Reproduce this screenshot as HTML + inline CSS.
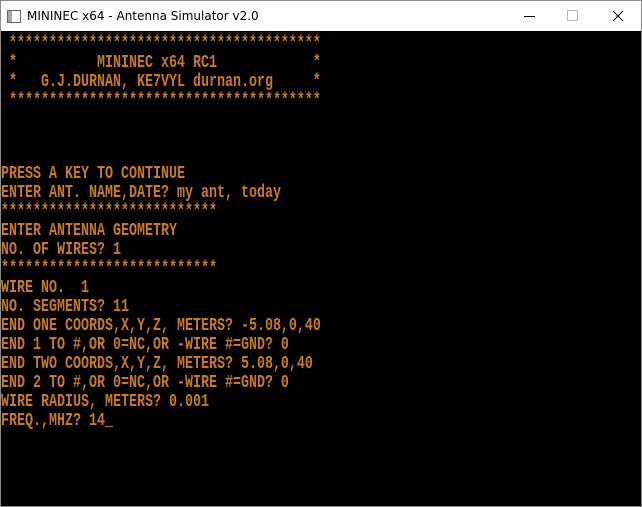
<!DOCTYPE html>
<html><head><style>
body{margin:0;width:642px;height:507px;overflow:hidden;background:#fff;}
.win{position:absolute;left:0;top:0;width:640px;height:505px;border:1px solid #8a8a8a;background:#000;}
.tb{position:absolute;left:0;top:0;width:640px;height:30px;background:#fff;font-family:"DejaVu Sans","Liberation Sans",sans-serif;font-size:12px;color:#000;}
.tb .t{position:absolute;left:26px;top:8px;}
.ic{position:absolute;left:6px;top:9px;width:12px;height:11px;border:1px solid #666;background:linear-gradient(90deg,#9aa 0 4px,#fff 4px);}
.con{position:absolute;left:0;top:31px;font-family:"Liberation Mono",monospace;font-size:13.33px;color:#c77a25;font-weight:bold;}
.l{height:19px;line-height:19px;white-space:pre;}
.l span{display:inline-block;transform:scaleY(1.4);transform-origin:center;}
.h{position:relative;top:3px;}
</style></head><body>
<div class="win">
<div class="tb"><div class="ic"></div><div class="t">MININEC x64 - Antenna Simulator v2.0</div>
<div style="position:absolute;left:523px;top:15px;width:11px;height:1px;background:#000"></div>
<div style="position:absolute;left:566px;top:9px;width:9px;height:9px;border:1px solid #bbb"></div>
<svg style="position:absolute;left:611px;top:9px" width="12" height="12"><path d="M1 1L11 11M11 1L1 11" stroke="#000" stroke-width="1"/></svg>
</div>
<div class="con">
<div class="l h"><span> ***************************************</span></div>
<div class="l h"><span> *          MININEC x64 RC1            *</span></div>
<div class="l h"><span> *   G.J.DURNAN, KE7VYL durnan.org     *</span></div>
<div class="l h"><span> ***************************************</span></div>
<div class="l"> </div><div class="l"> </div><div class="l"> </div>
<div class="l"><span>PRESS A KEY TO CONTINUE</span></div>
<div class="l"><span>ENTER ANT. NAME,DATE? my ant, today</span></div>
<div class="l"><span>***************************</span></div>
<div class="l"><span>ENTER ANTENNA GEOMETRY</span></div>
<div class="l"><span>NO. OF WIRES? 1</span></div>
<div class="l"><span>***************************</span></div>
<div class="l"><span>WIRE NO.  1</span></div>
<div class="l"><span>NO. SEGMENTS? 11</span></div>
<div class="l"><span>END ONE COORDS,X,Y,Z, METERS? -5.08,0,40</span></div>
<div class="l"><span>END 1 TO #,OR 0=NC,OR -WIRE #=GND? 0</span></div>
<div class="l"><span>END TWO COORDS,X,Y,Z, METERS? 5.08,0,40</span></div>
<div class="l"><span>END 2 TO #,OR 0=NC,OR -WIRE #=GND? 0</span></div>
<div class="l"><span>WIRE RADIUS, METERS? 0.001</span></div>
<div class="l"><span>FREQ.,MHZ? 14_</span></div>
</div>
</div>
</body></html>
